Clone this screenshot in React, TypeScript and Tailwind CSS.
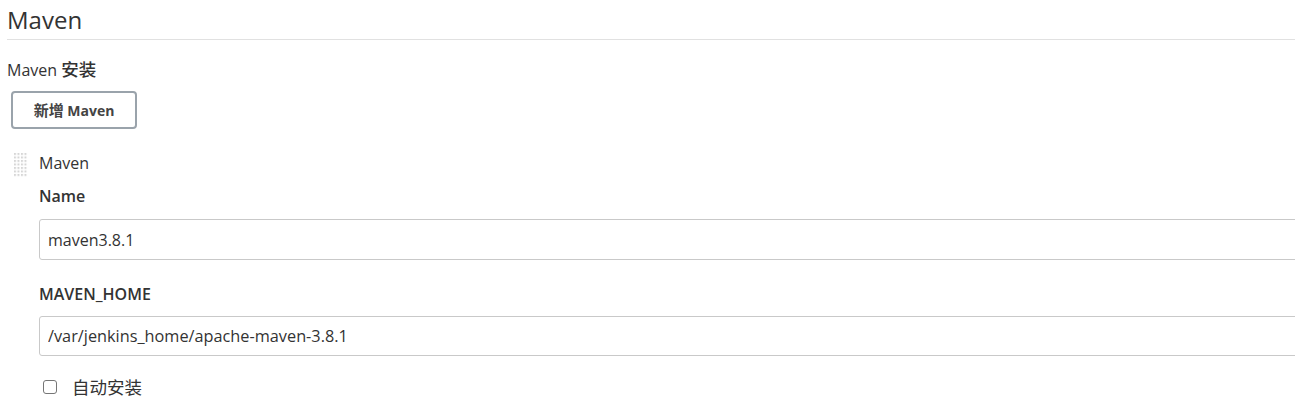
function DragHandle() {
  return (
    <svg width="14" height="24" viewBox="0 0 14 24" className="shrink-0">
      <defs>
        <pattern id="dots" width="3.5" height="3.5" patternUnits="userSpaceOnUse">
          <rect width="2" height="2" fill="#d6d6d6" />
        </pattern>
      </defs>
      <rect width="14" height="24" fill="url(#dots)" />
    </svg>
  );
}

function Cjk({ children }: { children: React.ReactNode }) {
  return <span className="text-[17.5px]">{children}</span>;
}

export default function App() {
  return (
    <div
      className="w-full h-[411px] overflow-hidden bg-white text-[#333]"
      style={{ fontFamily: '"Open Sans", "Noto Sans CJK SC", sans-serif' }}
    >
      <div className="pl-[7px]">
        <h1 className="text-[24px] leading-[38px] font-medium text-[#333] border-b border-[#e1e1e1] pt-[1px]">
          Maven
        </h1>
        <div className="mt-[17px] h-[24px] text-[16px] leading-[24px] font-medium">
          Maven <Cjk>安装</Cjk>
        </div>
        <button className="mt-[10px] ml-[4px] h-[38px] w-[126px] rounded-[4px] border-2 border-[#9aa3ab] bg-white text-[14px] font-bold text-[#444]">
          <span className="text-[15px]">新增</span> Maven
        </button>
        <div className="mt-[25px] flex items-start gap-[11px] pl-[7px]">
          <div className="-mt-[1px]">
            <DragHandle />
          </div>
          <div className="flex-1">
            <div className="text-[16px] leading-[20px] -mt-[1px]">Maven</div>
            <div className="mt-[11px] text-[16px] leading-[24px] font-semibold">Name</div>
            <input
              readOnly
              value="maven3.8.1"
              className="mt-[11px] block w-[1400px] h-[41px] rounded-[3px] border border-[#c9c9c9] px-[8px] text-[16px] text-[#333] outline-none"
            />
            <div className="mt-[22px] text-[16px] leading-[24px] font-semibold">MAVEN_HOME</div>
            <input
              readOnly
              value="/var/jenkins_home/apache-maven-3.8.1"
              className="mt-[10px] block w-[1400px] h-[40px] rounded-[3px] border border-[#c9c9c9] px-[8px] text-[16.3px] text-[#333] outline-none"
            />
            <label className="mt-[21px] flex items-center gap-[15px] pl-[4px]">
              <span className="block w-[14px] h-[14px] rounded-[3px] border border-[#767676] bg-white" />
              <span className="text-[17.5px] leading-[20px]">自动安装</span>
            </label>
          </div>
        </div>
      </div>
    </div>
  );
}
